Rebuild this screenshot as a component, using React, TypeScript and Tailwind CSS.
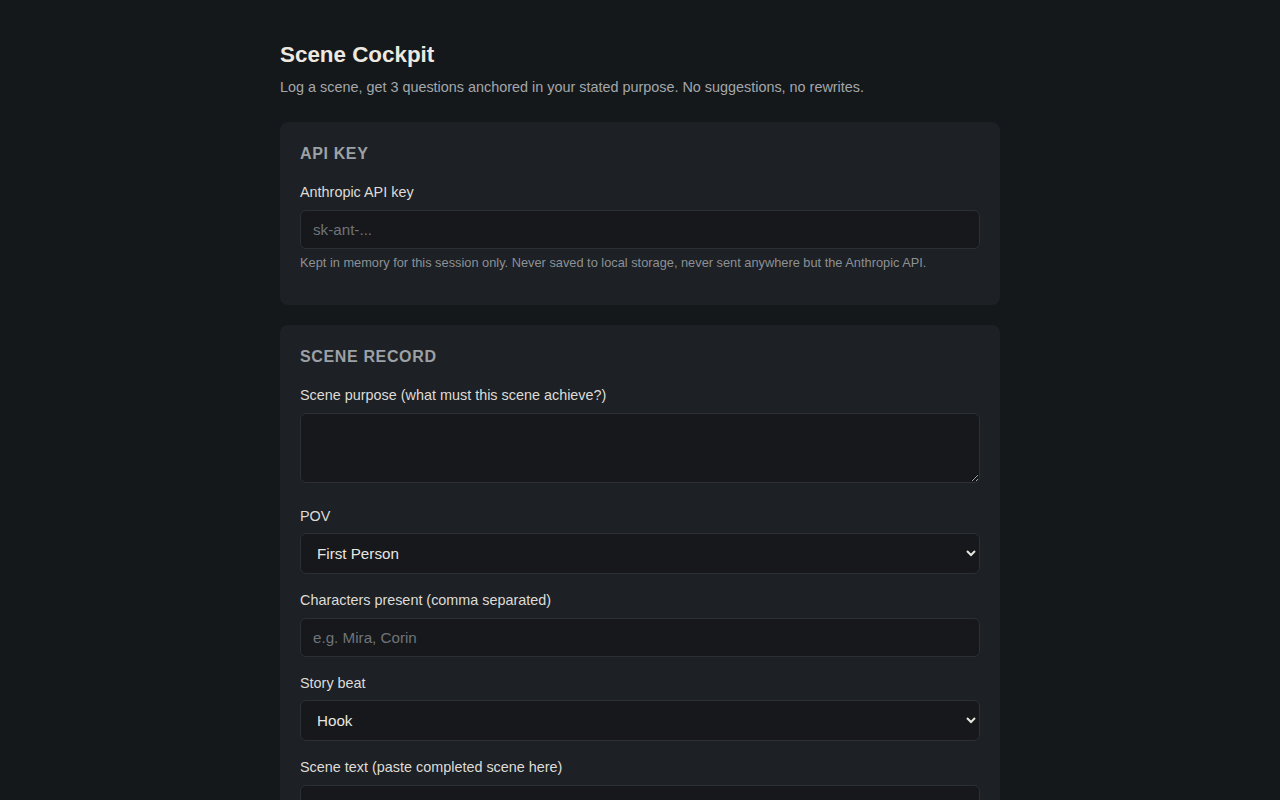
import React, { useState } from 'react';

const font = { fontFamily: '"Liberation Sans", Arial, sans-serif' };

function Field({ label, children }: { label: string; children: React.ReactNode }) {
  return (
    <div className="mb-4">
      <label className="block mb-1.5 text-[14.4px] leading-normal text-[#dddcd8]">{label}</label>
      {children}
    </div>
  );
}

const inputCls =
  'block w-full rounded-md border border-[#2c3036] bg-[#16181b] px-3 py-[10px] text-[15.2px] leading-[17px] text-[#e8e6e1] placeholder:text-[#6f747a] outline-none';

const selectCls =
  'block w-full h-[41px] rounded-md border border-[#2c3036] bg-[#16181b] px-3 text-[15.2px] text-[#e8e6e1] outline-none';

const areaCls =
  'w-full h-[70px] rounded-md border border-[#2c3036] bg-[#16181b] px-3 py-[10px] text-[15.2px] text-[#e8e6e1] outline-none';

export default function App() {
  const [apiKey, setApiKey] = useState('');
  const [purpose, setPurpose] = useState('');
  const [pov, setPov] = useState('First Person');
  const [characters, setCharacters] = useState('');
  const [beat, setBeat] = useState('Hook');
  const [sceneText, setSceneText] = useState('');

  return (
    <div className="min-h-screen bg-[#15181b] [color-scheme:dark]" style={font}>
      <div className="mx-auto w-[720px] pt-[42px] pb-10">
        <h1 className="text-[22.4px] font-bold leading-[1.2] text-[#ede9e0] mb-2">Scene Cockpit</h1>
        <p className="text-[14.4px] leading-normal text-[#a3a7ab] mb-6">
          Log a scene, get 3 questions anchored in your stated purpose. No suggestions, no rewrites.
        </p>

        {/* API key */}
        <section className="rounded-lg bg-[#1d2024] px-5 pt-5 pb-[17px] mb-5">
          <h2 className="text-base font-bold uppercase tracking-[0.04em] leading-normal text-[#9ca1a6] mb-4">API Key</h2>
          <div className="mb-4">
            <label className="block mb-1.5 text-[14.4px] leading-normal text-[#dddcd8]">Anthropic API key</label>
            <input
              type="password"
              value={apiKey}
              onChange={(e) => setApiKey(e.target.value)}
              placeholder="sk-ant-..."
              className={inputCls}
            />
            <p className="mt-[5px] text-[12.8px] leading-[1.4] text-[#8c9196]">
              Kept in memory for this session only. Never saved to local storage, never sent anywhere but the Anthropic API.
            </p>
          </div>
        </section>

        {/* Scene record */}
        <section className="rounded-lg bg-[#1d2024] px-5 pt-5 pb-1">
          <h2 className="text-base font-bold uppercase tracking-[0.04em] leading-normal text-[#9ca1a6] mb-4">Scene Record</h2>

          <Field label="Scene purpose (what must this scene achieve?)">
            <textarea value={purpose} onChange={(e) => setPurpose(e.target.value)} className={areaCls} />
          </Field>

          <Field label="POV">
            <select value={pov} onChange={(e) => setPov(e.target.value)} className={selectCls}>
              <option>First Person</option>
              <option>Second Person</option>
              <option>Third Person Limited</option>
              <option>Third Person Omniscient</option>
            </select>
          </Field>

          <Field label="Characters present (comma separated)">
            <input
              type="text"
              value={characters}
              onChange={(e) => setCharacters(e.target.value)}
              placeholder="e.g. Mira, Corin"
              className={inputCls}
            />
          </Field>

          <Field label="Story beat">
            <select value={beat} onChange={(e) => setBeat(e.target.value)} className={selectCls}>
              <option>Hook</option>
              <option>Inciting Incident</option>
              <option>Rising Action</option>
              <option>Midpoint</option>
              <option>Climax</option>
              <option>Resolution</option>
            </select>
          </Field>

          <Field label="Scene text (paste completed scene here)">
            <textarea
              value={sceneText}
              onChange={(e) => setSceneText(e.target.value)}
              className="w-full h-[200px] rounded-md border border-[#2c3036] bg-[#16181b] px-3 py-[10px] text-[15.2px] text-[#e8e6e1] outline-none"
            />
          </Field>
        </section>
      </div>
    </div>
  );
}
